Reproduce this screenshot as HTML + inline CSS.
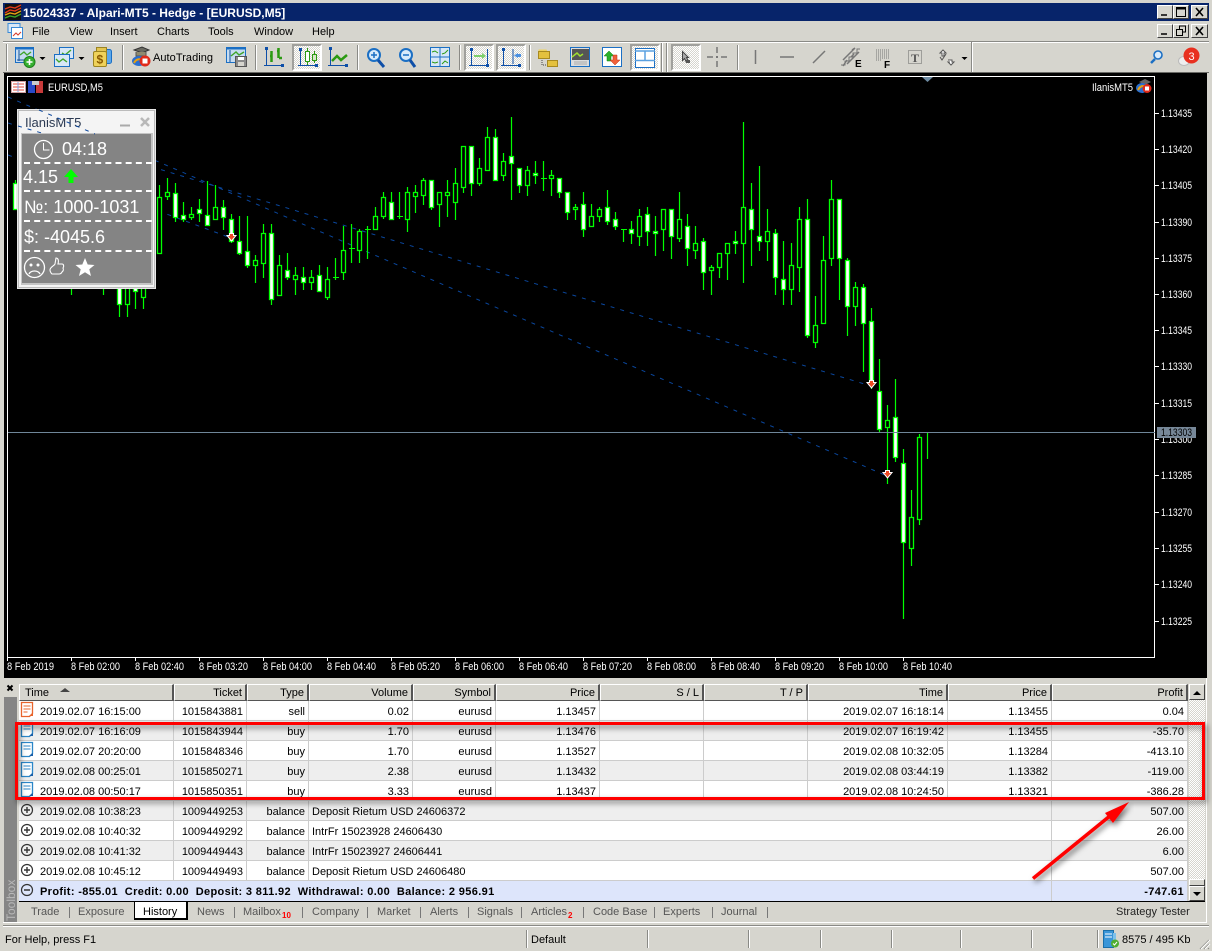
<!DOCTYPE html>
<html><head><meta charset="utf-8"><title>MT5</title>
<style>
html,body{margin:0;padding:0}
body{width:1212px;height:951px;position:relative;overflow:hidden;background:#d6d5ce;font:11px "Liberation Sans",sans-serif;color:#000}
.a{position:absolute;white-space:nowrap}
.dith{position:absolute;background:repeating-conic-gradient(#fff 0 25%,#d6d5ce 0 50%) 0 0/2px 2px;box-sizing:border-box;border:2px solid;border-color:#a0a09c #fff #fff #a0a09c}
.wb{position:absolute;width:16px;height:14px;background:#d6d5ce;box-sizing:border-box;border:1px solid;border-color:#fff #404040 #404040 #fff}
.sep{position:absolute;width:1px;background:#8a8a86;border-right:1px solid #fff}
table{position:absolute;left:19px;top:684px;width:1169px;border-collapse:separate;border-spacing:0;table-layout:fixed;font-size:11px}
th{height:17px;padding:1px 3px 0 0;font-weight:normal;text-align:right;background:#d6d5ce;box-sizing:border-box;border-top:1px solid #fff;border-left:1px solid #fff;border-right:2px solid #555;border-bottom:1px solid #555;overflow:hidden}
td{height:20px;box-sizing:border-box;padding:2px 3px 0 0;text-align:right;border-right:1px solid #ccc;border-bottom:1px solid #ccc;white-space:nowrap;overflow:hidden}
tr.g td{background:#eee}tr.w td{background:#fff}
tr.f td{background:#dde5fb;font-weight:bold;border-bottom:0;height:20px;letter-spacing:.35px}
td.l{text-align:left;padding-left:3px}
td.t{text-align:left;padding-left:21px}
.tb{position:absolute;top:905px;color:#555;line-height:14px}
.ts{position:absolute;top:907px;width:1px;height:11px;background:#777}
.n{position:absolute;font:bold 8px "Liberation Sans",sans-serif;color:#f00;top:911px}
.m{position:absolute;top:26px;line-height:13px}
.ss{position:absolute;top:930px;width:1px;height:18px;background:#8a8a86;border-right:1px solid #fff}
</style></head><body>

<!-- title -->
<div class="a" style="left:3px;top:3px;width:1206px;height:18px;background:#07246a"></div>
<div class="a" style="left:23px;top:5px;color:#fff;font:bold 12px/16px 'Liberation Sans',sans-serif">15024337 - Alpari-MT5 - Hedge - [EURUSD,M5]</div>
<div class="wb" style="left:1157px;top:5px"></div><div class="wb" style="left:1173px;top:5px"></div><div class="wb" style="left:1191px;top:5px;width:17px"></div>
<div class="wb" style="left:1157px;top:24px"></div><div class="wb" style="left:1173px;top:24px"></div><div class="wb" style="left:1191px;top:24px;width:17px"></div>

<!-- menu -->
<div class="m" style="left:32px">File</div><div class="m" style="left:69px">View</div><div class="m" style="left:110px">Insert</div><div class="m" style="left:157px">Charts</div><div class="m" style="left:208px">Tools</div><div class="m" style="left:254px">Window</div><div class="m" style="left:312px">Help</div>

<div class="a" style="left:3px;top:41px;width:1206px;height:1px;background:#8a8a86"></div>
<div class="a" style="left:3px;top:42px;width:1206px;height:1px;background:#fff"></div>

<!-- toolbar -->
<div class="dith" style="left:292px;top:44px;width:30px;height:27px"></div>
<div class="dith" style="left:464px;top:44px;width:30px;height:27px"></div>
<div class="dith" style="left:496px;top:44px;width:30px;height:27px"></div>
<div class="dith" style="left:630px;top:44px;width:30px;height:27px"></div>
<div class="dith" style="left:671px;top:44px;width:30px;height:27px"></div>
<div class="sep" style="left:6px;top:44px;height:27px"></div>
<div class="sep" style="left:122px;top:45px;height:25px"></div>
<div class="sep" style="left:255px;top:45px;height:25px"></div>
<div class="sep" style="left:357px;top:45px;height:25px"></div>
<div class="sep" style="left:459px;top:45px;height:25px"></div>
<div class="sep" style="left:529px;top:45px;height:25px"></div>
<div class="sep" style="left:661px;top:43px;height:29px"></div>
<div class="sep" style="left:666px;top:43px;height:29px"></div>
<div class="sep" style="left:737px;top:45px;height:25px"></div>
<div class="sep" style="left:971px;top:42px;height:30px"></div>
<div class="a" style="left:153px;top:51px;font-size:11px;line-height:14px;letter-spacing:.05px">AutoTrading</div>

<svg class="a" style="left:0;top:0" width="1212" height="76" viewBox="0 0 1212 76" fill="none">
<!-- title logo -->
<rect x="5" y="4" width="16" height="16" fill="#111"/>
<path d="M5 9l5-2 5 1 6-3M5 13l5-3 5 1 6-3" stroke="#e23a1a" stroke-width="1.4"/><path d="M5 15l5-2 5 1 6-3" stroke="#e8a010" stroke-width="1.4"/><path d="M5 18l5-2 5 1 6-3" stroke="#3aa52a" stroke-width="1.4"/>
<!-- window buttons -->
<g stroke="#000" stroke-width="1.6"><path d="M1161 15h6M1161 34h6M1196 8l7 8M1203 8l-7 8M1196 27l7 8M1203 27l-7 8" /></g>
<rect x="1176.500" y="7.500" width="9" height="9" stroke="#000"/><path d="M1176 8.500h10" stroke="#000" stroke-width="2"/>
<path d="M1176.500 29.500h6v6h-6zM1179.500 29v-3h6v6h-3" stroke="#000"/>
<!-- menu doc icon -->
<rect x="8" y="23.500" width="12" height="9" fill="#d9e8f7" stroke="#3a8ad6"/><rect x="11.500" y="27.500" width="11" height="11" fill="#fff" stroke="#3a8ad6"/><path d="M13 36l3-3 2 2 3-3" stroke="#d63a2a"/>
<!-- new chart -->
<rect x="15.500" y="47.500" width="18" height="15" fill="#c6dcf1" stroke="#1b6fc4"/><path d="M15 48.500h19" stroke="#1b6fc4" stroke-width="2"/><path d="M19 50v11M17 60h14" stroke="#124f9c"/><path d="M20 55l4-3 3 3 4-3" stroke="#3fa52a" stroke-width="1.400"/>
<circle cx="29.500" cy="62" r="5.500" fill="#35b030" stroke="#1f7f1d"/><path d="M29.500 59v6M26.500 62h6" stroke="#fff" stroke-width="1.600"/>
<path d="M39.500 57h6l-3 3z" fill="#000"/>
<!-- profiles -->
<rect x="59.500" y="47.500" width="14" height="11" fill="#d7e7f6" stroke="#1b6fc4"/><path d="M62 53l3 2 6-5" stroke="#3fa52a" stroke-width="1.400"/>
<rect x="54.500" y="54.500" width="15" height="12" fill="#d7e7f6" stroke="#1b6fc4"/><path d="M56 59l3 3 4-3 4 3" stroke="#3fa52a" stroke-width="1.400"/>
<path d="M78.500 57h6l-3 3z" fill="#000"/>
<!-- market -->
<rect x="99.500" y="49.500" width="12" height="14" rx="2" fill="#5ba7ea" stroke="#1b6fc4"/><rect x="96.500" y="47.500" width="10" height="6" fill="#e3c552" stroke="#9c8420"/>
<rect x="93.500" y="51.500" width="13" height="15" rx="1.500" fill="#efd25a" stroke="#9c8420"/><text x="96.500" y="63.500" font-family="Liberation Sans" font-weight="bold" font-size="12" fill="#8a5a00">$</text>
<!-- autotrading -->
<path d="M134 50l8-3 7 3-7 3z" fill="#6b6b62" stroke="#333"/><path d="M136 52v4h10v-4" fill="#8f8a70" stroke="#555"/><ellipse cx="139" cy="61" rx="7" ry="5" fill="#2a6fd0"/><path d="M134 63c2-4 6-5 9-2" stroke="#e8a010" stroke-width="2"/>
<circle cx="145" cy="61" r="5.500" fill="#e02a1a"/><rect x="142.500" y="58.500" width="5" height="5" fill="#fff"/>
<!-- chart save -->
<rect x="226.500" y="47.500" width="19" height="15" fill="#c6dcf1" stroke="#1b6fc4"/><path d="M226 48.500h20" stroke="#1b6fc4" stroke-width="2"/><path d="M230 50v12" stroke="#124f9c"/><path d="M231 56l5-4 3 3 5-3" stroke="#3fa52a" stroke-width="1.400"/>
<rect x="235.500" y="56.500" width="11" height="10" fill="#8b8b8b" stroke="#555"/><rect x="238" y="57" width="6" height="3" fill="#fff"/><rect x="238" y="62" width="6" height="4" fill="#d6d5ce"/>
<!-- bars -->
<g stroke="#0e4fa8"><path d="M266.500 47v18M264 65.500h20"/></g><path d="M265 47h3v3h-3zM281 64h3v3h-3z" fill="#0e4fa8"/>
<path d="M271.500 51v11M270 56h2M278.500 48v10M277 51h2M279 58h3" stroke="#2b9a12" stroke-width="2.500"/>
<!-- candles -->
<g stroke="#0e4fa8"><path d="M300.500 48v17M298 65.500h20"/></g><path d="M299 48h3v3h-3zM315 64h3v3h-3z" fill="#0e4fa8"/>
<path d="M307.500 48v17M314.500 51v12" stroke="#2b9a12"/><rect x="305.500" y="51.500" width="4" height="10" fill="#fff" stroke="#2b9a12"/><rect x="312.500" y="54.500" width="4" height="6" fill="#d6e8c8" stroke="#2b9a12"/>
<!-- line chart -->
<g stroke="#0e4fa8"><path d="M330.500 48v17M328 65.500h20"/></g><path d="M329 47h3v3h-3zM345 64h3v3h-3z" fill="#0e4fa8"/>
<path d="M332 61l5-5 4 4 6-5" stroke="#2b9a12" stroke-width="2.500"/>
<!-- zoom in / out -->
<circle cx="374" cy="55" r="6" fill="#d9ebfb" stroke="#1b6fc4" stroke-width="2"/><path d="M371 55h6M374 52v6" stroke="#1b6fc4" stroke-width="1.500"/><path d="M378 60l6 7" stroke="#0e4fa8" stroke-width="3"/>
<circle cx="406" cy="55" r="6" fill="#d9ebfb" stroke="#1b6fc4" stroke-width="2"/><path d="M403 55h6" stroke="#1b6fc4" stroke-width="1.500"/><path d="M410 60l5 7" stroke="#0e4fa8" stroke-width="3"/>
<!-- tile -->
<rect x="430.500" y="47.500" width="19" height="19" fill="#d7e7f6" stroke="#1b6fc4"/><path d="M440 47v20M430 57h20" stroke="#1b6fc4"/><path d="M432 52l3-1 3 2M442 54l3-1 3-3M432 62l3 1 3-1M442 64l3-3 3 2" stroke="#2b9a12"/>
<!-- shift -->
<path d="M471.500 49v17M469 65.500h19M487.500 49v15" stroke="#0e4fa8"/><path d="M470 48h3v3h-3zM486 64h3v3h-3z" fill="#0e4fa8"/><path d="M474 55h8v-2l4 3-4 3v-2h-8z" fill="#7ccf6a"/>
<path d="M503.500 49v17M501 65.500h19M513 49v15" stroke="#0e4fa8"/><path d="M502 48h3v3h-3zM518 64h3v3h-3z" fill="#0e4fa8"/><path d="M521 54h-3v-1l-4 2.500 4 2.500v-1h3z" fill="#4a8fe0"/>
<!-- folders -->
<path d="M538.500 49.500h8l1 2h2v5l-2 0v0h-9z" fill="#eed25f"/><rect x="538.500" y="51.500" width="11" height="7" fill="#e4c13e" stroke="#a88a20"/><rect x="547.500" y="60.500" width="10" height="6" fill="#e4c13e" stroke="#a88a20"/><path d="M542 60v5h5" stroke="#444" stroke-dasharray="1 1"/>
<!-- market watch -->
<rect x="570.500" y="47.500" width="19" height="19" fill="#ddd" stroke="#1b6fc4"/><rect x="572" y="49" width="17" height="11" fill="#555"/><path d="M572 57l5-4 3 3 3-2" stroke="#9fe030" stroke-width="1.500"/><path d="M574 62h13M574 64h13" stroke="#aaa"/>
<!-- up down -->
<rect x="602.500" y="47.500" width="19" height="19" fill="#fff" stroke="#1b6fc4"/><path d="M609 51l-5 5h3v5h4v-5h3z" fill="#2bb02b" stroke="#128012" stroke-width=".5"/><path d="M615 65l5-5h-3v-5h-4v5h-3z" fill="#f0603a" stroke="#c03010" stroke-width=".5"/>
<!-- layout -->
<rect x="635.500" y="48.500" width="19" height="19" fill="#fff" stroke="#1b6fc4"/><path d="M635 51h20M635 60.500h20M645 51v10" stroke="#5aa0e0" stroke-width="1.500"/>
<!-- cursor -->
<path d="M682.500 51.500l6 6h-2l2 4-2 1-2-4-2 2z" fill="#aaa" stroke="#444"/><rect x="686" y="60" width="4" height="3" fill="#555"/>
<!-- crosshair -->
<path d="M717 47v6M717 61v6M707 57h6M721 57h6" stroke="#777" stroke-width="1.500"/><rect x="716" y="56" width="2" height="2" fill="#777"/>
<!-- drawing -->
<path d="M755.500 50v14M780 57h14M813 63l12-12" stroke="#777" stroke-width="1.500"/>
<!-- E -->
<path d="M843 60l12-12M847 64l12-12M852 50l3-2M843 66l4-6M851 57l3-3" stroke="#777" stroke-width="1.500"/><path d="M841 65h4v-4h4v-4h4v-4h4v-4h3" stroke="#777"/>
<text x="855" y="67" font-family="Liberation Sans" font-weight="bold" font-size="10" fill="#000">E</text>
<!-- F -->
<path d="M876 50h14M876 52h14M876 54h14M876 56h14M876 58h14M876 60h6" stroke="#777" stroke-dasharray="1 1"/>
<text x="884" y="68" font-family="Liberation Sans" font-weight="bold" font-size="10" fill="#000">F</text>
<!-- T -->
<rect x="908.500" y="50.500" width="13" height="13" stroke="#666" stroke-dasharray="1 1"/><text x="911" y="62" font-family="Liberation Serif" font-weight="bold" font-size="12" fill="#555">T</text>
<!-- arrows -->
<path d="M943 50l3 3-2 0v3h-2v-3h-2zM948 60h2l2 0v2h2l-3 3-3-3h2" stroke="#555" fill="#fff"/><path d="M940 57l2 3 4-6" stroke="#555"/>
<path d="M961.500 57h6l-3 3z" fill="#000"/>
<!-- search -->
<circle cx="1158" cy="55" r="4" fill="#d9ebfb" stroke="#1b6fc4" stroke-width="1.600"/><path d="M1155 59l-4 4" stroke="#1b6fc4" stroke-width="2.500"/>
<!-- bubble -->
<ellipse cx="1184" cy="61" rx="5.500" ry="4.500" fill="#eee" stroke="#bbb"/><circle cx="1191.500" cy="55.500" r="8" fill="#e8301f"/>
<text x="1188.500" y="60" font-family="Liberation Sans" font-size="11" fill="#fff">3</text>
</svg>

<!-- chart frame -->
<div class="a" style="left:3px;top:72px;width:1206px;height:1px;background:#6a6a66"></div>
<div class="a" style="left:4px;top:73px;width:1203px;height:605px;background:#000"></div>

<svg class="a" style="left:0;top:0" width="1212" height="680" viewBox="0 0 1212 680" fill="none">
<path d="M7.500 76.500H1154.500V657.500H7.500z" stroke="#fff"/>
<path d="M922 77h11l-5.500 5z" fill="#6f8ca3"/>
<!-- blue lines -->
<g stroke="#0a469c" stroke-dasharray="4 6">
<path d="M8 97L887 476"/><path d="M8 123L871 386"/><path d="M8 155L231 238"/>
</g>
<!-- wicks -->
<path stroke="#0f0" stroke-width="1.2" d="M15.500 180V209M71.500 288V295M103.500 288V295M119.500 288V317M127.500 288V317M135.500 288V309M143.500 288V309M159.500 185V253M167.500 178V200M175.500 183V222M183.500 202V222M191.500 207V220M199.500 199V222M207.500 181V225M215.500 185V219M223.500 200V230M231.500 214V243M239.500 216V255M247.500 216V268M255.500 255V283M263.500 224V278M271.500 224V305M279.500 255V295M287.500 253V280M295.500 267V295M303.500 267V290M311.500 270V290M319.500 265V291M327.500 267V300M335.500 258V280M343.500 226V280M351.500 224V263M359.500 229V263M367.500 226V259M375.500 207V229M383.500 192V219M391.500 192V219M399.500 192V219M407.500 187V232M415.500 185V213M423.500 178V205M431.500 180V210M439.500 192V227M447.500 180V217M455.500 168V220M463.500 146V193M471.500 146V196M479.500 158V186M487.500 127V170M495.500 129V180M503.500 153V181M511.500 117V200M519.500 168V193M527.500 166V196M535.500 161V184M543.500 161V191M551.500 170V196M559.500 178V198M567.500 192V220M575.500 204V220M583.500 192V237M591.500 204V226M599.500 207V222M607.500 190V225M615.500 212V230M623.500 229V242M631.500 221V244M639.500 209V246M647.500 207V246M655.500 216V256M663.500 209V251M671.500 209V259M679.500 192V242M687.500 214V266M695.500 226V259M703.500 238V290M711.500 265V295M719.500 253V278M727.500 243V280M735.500 231V254M743.500 122V283M751.500 183V266M759.500 166V251M767.500 209V261M775.500 229V295M783.500 241V305M791.500 243V305M799.500 207V292M807.500 199V338M815.500 296V348M823.500 236V323M831.500 180V266M839.500 199V300M847.500 258V336M855.500 282V326M863.500 284V372M871.500 308V389M879.500 359V432M887.500 405V484M895.500 379V462M903.500 449V619M911.500 490V566M919.500 434V525M927.500 432V459"/>
<!-- doji -->
<path stroke="#0f0" d="M333 277.500h6M349 248.500h6M365 229.500h6M397 216.500h6M541 178.500h6M621 229.500h6M925 432.500h6"/>
<!-- hollow -->
<path stroke="#0f0" stroke-width="1.300" fill="#000" d="M125.500 270.500h4v34h-4zM141.500 270.500h4v27h-4zM157.500 197.500h4v56h-4zM165.500 192.500h4v4h-4zM189.500 214.500h4v3h-4zM213.500 207.500h4v12h-4zM253.500 260.500h4v5h-4zM261.500 233.500h4v30h-4zM277.500 265.500h4v30h-4zM293.500 275.500h4v4h-4zM309.500 277.500h4v5h-4zM325.500 279.500h4v18h-4zM341.500 250.500h4v22h-4zM357.500 231.500h4v19h-4zM373.500 216.500h4v13h-4zM381.500 197.500h4v19h-4zM405.500 192.500h4v27h-4zM413.500 192.500h4v4h-4zM421.500 180.500h4v15h-4zM437.500 192.500h4v12h-4zM445.500 192.500h4v3h-4zM453.500 183.500h4v19h-4zM461.500 146.500h4v41h-4zM477.500 168.500h4v15h-4zM485.500 137.500h4v33h-4zM501.500 161.500h4v14h-4zM525.500 170.500h4v15h-4zM549.500 175.500h4v3h-4zM573.500 207.500h4v2h-4zM589.500 216.500h4v10h-4zM597.500 209.500h4v7h-4zM637.500 216.500h4v20h-4zM661.500 209.500h4v20h-4zM677.500 219.500h4v19h-4zM693.500 243.500h4v7h-4zM709.500 267.500h4v3h-4zM717.500 253.500h4v14h-4zM725.500 243.500h4v10h-4zM741.500 207.500h4v36h-4zM765.500 231.500h4v10h-4zM789.500 265.500h4v24h-4zM797.500 219.500h4v48h-4zM813.500 325.500h4v17h-4zM821.500 260.500h4v63h-4zM829.500 199.500h4v59h-4zM853.500 287.500h4v19h-4zM885.500 420.500h4v7h-4zM909.500 517.500h4v31h-4zM917.500 437.500h4v82h-4z"/>
<!-- white -->
<path stroke="#0f0" stroke-width="1.300" fill="#fff" d="M13.500 183.500h4v26h-4zM117.500 270.500h4v34h-4zM133.500 270.500h4v21h-4zM173.500 193.500h4v24h-4zM181.500 215.500h4v4h-4zM197.500 209.500h4v4h-4zM205.500 215.500h4v10h-4zM221.500 207.500h4v10h-4zM229.500 219.500h4v22h-4zM237.500 241.500h4v12h-4zM245.500 251.500h4v14h-4zM269.500 233.500h4v66h-4zM285.500 270.500h4v7h-4zM301.500 277.500h4v5h-4zM317.500 275.500h4v16h-4zM389.500 202.500h4v17h-4zM429.500 180.500h4v27h-4zM469.500 146.500h4v37h-4zM493.500 137.500h4v43h-4zM509.500 156.500h4v7h-4zM517.500 168.500h4v17h-4zM533.500 173.500h4v2h-4zM557.500 178.500h4v14h-4zM565.500 192.500h4v20h-4zM581.500 204.500h4v25h-4zM605.500 207.500h4v14h-4zM613.500 219.500h4v7h-4zM629.500 229.500h4v4h-4zM645.500 214.500h4v17h-4zM653.500 231.500h4v2h-4zM669.500 209.500h4v27h-4zM685.500 226.500h4v22h-4zM701.500 241.500h4v31h-4zM733.500 241.500h4v2h-4zM749.500 209.500h4v20h-4zM757.500 236.500h4v5h-4zM773.500 233.500h4v44h-4zM781.500 279.500h4v10h-4zM805.500 219.500h4v116h-4zM837.500 199.500h4v59h-4zM845.500 260.500h4v46h-4zM861.500 287.500h4v36h-4zM869.500 321.500h4v62h-4zM877.500 391.500h4v38h-4zM893.500 417.500h4v40h-4zM901.500 463.500h4v79h-4z"/>
<!-- red markers -->
<g fill="#ee4a24" stroke="#fff"><path d="M229.500 233.500h4v2h2.500l-4.500 5.500-4.500-5.500h2.500z"/><path d="M869.500 380.500h4v2h2.500l-4.500 5.500-4.500-5.500h2.500z"/><path d="M885.500 470.500h4v2h2.500l-4.500 5.500-4.500-5.500h2.500z"/></g>
<!-- current price line -->
<path d="M8 432.500H1155" stroke="#6f8699"/>
<!-- axis ticks -->
<path stroke="#fff" d="M1155 113.500h4M1155 149.500h4M1155 185.500h4M1155 222.500h4M1155 258.500h4M1155 294.500h4M1155 330.500h4M1155 366.500h4M1155 403.500h4M1155 439.500h4M1155 475.500h4M1155 512.500h4M1155 548.500h4M1155 584.500h4M1155 621.500h4M7.500 658v3M71.500 658v3M135.500 658v3M199.500 658v3M263.500 658v3M327.500 658v3M391.500 658v3M455.500 658v3M519.500 658v3M583.500 658v3M647.500 658v3M711.500 658v3M775.500 658v3M839.500 658v3M903.500 658v3"/>
<g font-family="Liberation Sans" font-size="11" fill="#fff">
<text x="1161" y="117" textLength="31" lengthAdjust="spacingAndGlyphs">1.13435</text>
<text x="1161" y="153" textLength="31" lengthAdjust="spacingAndGlyphs">1.13420</text>
<text x="1161" y="189" textLength="31" lengthAdjust="spacingAndGlyphs">1.13405</text>
<text x="1161" y="226" textLength="31" lengthAdjust="spacingAndGlyphs">1.13390</text>
<text x="1161" y="262" textLength="31" lengthAdjust="spacingAndGlyphs">1.13375</text>
<text x="1161" y="298" textLength="31" lengthAdjust="spacingAndGlyphs">1.13360</text>
<text x="1161" y="334" textLength="31" lengthAdjust="spacingAndGlyphs">1.13345</text>
<text x="1161" y="370" textLength="31" lengthAdjust="spacingAndGlyphs">1.13330</text>
<text x="1161" y="407" textLength="31" lengthAdjust="spacingAndGlyphs">1.13315</text>
<text x="1161" y="443" textLength="31" lengthAdjust="spacingAndGlyphs">1.13300</text>
<text x="1161" y="479" textLength="31" lengthAdjust="spacingAndGlyphs">1.13285</text>
<text x="1161" y="516" textLength="31" lengthAdjust="spacingAndGlyphs">1.13270</text>
<text x="1161" y="552" textLength="31" lengthAdjust="spacingAndGlyphs">1.13255</text>
<text x="1161" y="588" textLength="31" lengthAdjust="spacingAndGlyphs">1.13240</text>
<text x="1161" y="625" textLength="31" lengthAdjust="spacingAndGlyphs">1.13225</text>
<rect x="1157" y="427" width="39" height="11" fill="#778899"/>
<text x="1161" y="436" textLength="31" lengthAdjust="spacingAndGlyphs" fill="#000">1.13303</text>
<text x="7" y="670" textLength="47" lengthAdjust="spacingAndGlyphs">8 Feb 2019</text>
<text x="71" y="670" textLength="49" lengthAdjust="spacingAndGlyphs">8 Feb 02:00</text>
<text x="135" y="670" textLength="49" lengthAdjust="spacingAndGlyphs">8 Feb 02:40</text>
<text x="199" y="670" textLength="49" lengthAdjust="spacingAndGlyphs">8 Feb 03:20</text>
<text x="263" y="670" textLength="49" lengthAdjust="spacingAndGlyphs">8 Feb 04:00</text>
<text x="327" y="670" textLength="49" lengthAdjust="spacingAndGlyphs">8 Feb 04:40</text>
<text x="391" y="670" textLength="49" lengthAdjust="spacingAndGlyphs">8 Feb 05:20</text>
<text x="455" y="670" textLength="49" lengthAdjust="spacingAndGlyphs">8 Feb 06:00</text>
<text x="519" y="670" textLength="49" lengthAdjust="spacingAndGlyphs">8 Feb 06:40</text>
<text x="583" y="670" textLength="49" lengthAdjust="spacingAndGlyphs">8 Feb 07:20</text>
<text x="647" y="670" textLength="49" lengthAdjust="spacingAndGlyphs">8 Feb 08:00</text>
<text x="711" y="670" textLength="49" lengthAdjust="spacingAndGlyphs">8 Feb 08:40</text>
<text x="775" y="670" textLength="49" lengthAdjust="spacingAndGlyphs">8 Feb 09:20</text>
<text x="839" y="670" textLength="49" lengthAdjust="spacingAndGlyphs">8 Feb 10:00</text>
<text x="903" y="670" textLength="49" lengthAdjust="spacingAndGlyphs">8 Feb 10:40</text>
<text x="48" y="91" textLength="55" lengthAdjust="spacingAndGlyphs">EURUSD,M5</text>
<text x="1092" y="91" textLength="41" lengthAdjust="spacingAndGlyphs">IlanisMT5</text>
</g>
<!-- chart header icons -->
<rect x="11.500" y="81.500" width="14" height="11" fill="#fff" stroke="#d0a0a0"/><path d="M13 84h11M13 87h11M13 90h11" stroke="#e04a3a"/><path d="M18 82v10" stroke="#8aa0e0"/>
<rect x="28" y="81" width="7" height="12" fill="#2a4ac8"/><rect x="36" y="81" width="7" height="12" fill="#c83a3a"/><rect x="32" y="81" width="7" height="4" fill="#ccc"/>
<!-- top right icon -->
<path d="M1139 82l6-3 6 3-6 3z" fill="#666"/><ellipse cx="1142" cy="88" rx="6" ry="5" fill="#2a6fd0"/><path d="M1138 90c2-4 5-5 8-3" stroke="#e8a010" stroke-width="2"/><circle cx="1147" cy="88.500" r="4.500" fill="#e02a1a"/><rect x="1145" y="86.500" width="4" height="4" fill="#fff"/>
</svg>

<!-- panel -->
<div class="a" style="left:17px;top:109px;width:139px;height:180px;box-sizing:border-box;border:1px solid #e8e8e8;outline:0;background:#f4f4f4;box-shadow:inset 0 0 0 1px #bbb"></div>
<div class="a" style="left:21px;top:133px;width:132px;height:152px;box-sizing:border-box;background:#848484;border:1px solid #c4c4c4;border-width:1px 2px 2px 1px"></div>
<div class="a" style="left:25px;top:115px;font-size:13px;line-height:16px;color:#2c3a52">IlanisMT5</div>
<div class="a" style="left:24px;top:162px;width:128px;border-top:2px dashed #fff;height:0"></div>
<div class="a" style="left:24px;top:190px;width:128px;border-top:2px dashed #fff;height:0"></div>
<div class="a" style="left:24px;top:220px;width:128px;border-top:2px dashed #fff;height:0"></div>
<div class="a" style="left:24px;top:250px;width:128px;border-top:2px dashed #fff;height:0"></div>
<div class="a" style="left:62px;top:138px;font-size:18px;line-height:22px;color:#fff">04:18</div>
<div class="a" style="left:23px;top:166px;font-size:18px;line-height:22px;color:#fff">4.15</div>
<div class="a" style="left:24px;top:196px;font-size:18px;line-height:22px;color:#fff;font-family:'Liberation Sans','Noto Sans CJK JP',sans-serif">№: 1000-1031</div>
<div class="a" style="left:24px;top:226px;font-size:18px;line-height:22px;color:#fff">$: -4045.6</div>
<svg class="a" style="left:0;top:100px" width="170" height="190" viewBox="0 100 170 190" fill="none">
<path d="M120 125.500h10" stroke="#aaa" stroke-width="2"/><path d="M141 118l8 8M149 118l-8 8" stroke="#b8b8b8" stroke-width="2.500"/>
<g stroke="#0a469c" stroke-dasharray="4 6"><path d="M39 110L95 134"/><path d="M18 126L45 134"/></g>
<circle cx="43.500" cy="149.500" r="9" stroke="#fff" stroke-width="1.300"/><path d="M43.500 143v7h6" stroke="#fff"/>
<path d="M71 169l-7 8h4.500v6h5v-6h4.500z" fill="#0f0"/>
<circle cx="34.500" cy="267.500" r="10" stroke="#fff" stroke-width="1.300"/><circle cx="31" cy="265" r="1.500" fill="#fff"/><circle cx="38" cy="265" r="1.500" fill="#fff"/><path d="M29 274c2-4 9-4 11 0" stroke="#fff" stroke-width="1.300"/>
<path d="M50 270c0-3 4-4 5-6l1-6c2 0 3 2 2 6h4c2 0 2 3 1 4 1 2 0 3-1 4-1 2-2 2-3 2h-7c-1-1-2-2-2-4z" stroke="#fff" stroke-width="1.100"/>
<path d="M85 258l2.700 6.500 6.800.5-5.200 4.300 1.700 6.700-6-3.700-6 3.700 1.700-6.700-5.200-4.300 6.800-.5z" fill="#fff"/>
</svg>

<!-- toolbox -->
<div class="a" style="left:0;top:678px;width:1212px;height:273px;background:#d6d5ce"></div>
<div class="a" style="left:1206px;top:678px;width:1px;height:244px;background:#fff"></div>
<div class="a" style="left:4px;top:697px;width:13px;height:225px;background:#858585"></div>
<div class="a" style="left:3px;top:905px;width:16px;font-size:12px;line-height:16px;color:#b8b8b8;transform:rotate(-90deg);transform-origin:8px 8px;">Toolbox</div>
<table>
<colgroup><col style="width:155px"><col style="width:73px"><col style="width:62px"><col style="width:104px"><col style="width:83px"><col style="width:104px"><col style="width:104px"><col style="width:104px"><col style="width:140px"><col style="width:104px"><col style="width:136px"></colgroup>
<tr><th style="text-align:left;padding-left:5px">Time</th><th>Ticket</th><th>Type</th><th>Volume</th><th>Symbol</th><th>Price</th><th>S / L</th><th>T / P</th><th>Time</th><th>Price</th><th>Profit</th></tr>
<tr class="w"><td class="t">2019.02.07 16:15:00</td><td>1015843881</td><td>sell</td><td>0.02</td><td>eurusd</td><td>1.13457</td><td></td><td></td><td>2019.02.07 16:18:14</td><td>1.13455</td><td>0.04</td></tr>
<tr class="g"><td class="t">2019.02.07 16:16:09</td><td>1015843944</td><td>buy</td><td>1.70</td><td>eurusd</td><td>1.13476</td><td></td><td></td><td>2019.02.07 16:19:42</td><td>1.13455</td><td>-35.70</td></tr>
<tr class="w"><td class="t">2019.02.07 20:20:00</td><td>1015848346</td><td>buy</td><td>1.70</td><td>eurusd</td><td>1.13527</td><td></td><td></td><td>2019.02.08 10:32:05</td><td>1.13284</td><td>-413.10</td></tr>
<tr class="g"><td class="t">2019.02.08 00:25:01</td><td>1015850271</td><td>buy</td><td>2.38</td><td>eurusd</td><td>1.13432</td><td></td><td></td><td>2019.02.08 03:44:19</td><td>1.13382</td><td>-119.00</td></tr>
<tr class="w"><td class="t">2019.02.08 00:50:17</td><td>1015850351</td><td>buy</td><td>3.33</td><td>eurusd</td><td>1.13437</td><td></td><td></td><td>2019.02.08 10:24:50</td><td>1.13321</td><td>-386.28</td></tr>
<tr class="g"><td class="t">2019.02.08 10:38:23</td><td>1009449253</td><td>balance</td><td class="l" colspan="7">Deposit Rietum USD 24606372</td><td>507.00</td></tr>
<tr class="w"><td class="t">2019.02.08 10:40:32</td><td>1009449292</td><td>balance</td><td class="l" colspan="7">IntrFr 15023928 24606430</td><td>26.00</td></tr>
<tr class="g"><td class="t">2019.02.08 10:41:32</td><td>1009449443</td><td>balance</td><td class="l" colspan="7">IntrFr 15023927 24606441</td><td>6.00</td></tr>
<tr class="w"><td class="t">2019.02.08 10:45:12</td><td>1009449493</td><td>balance</td><td class="l" colspan="7">Deposit Rietum USD 24606480</td><td>507.00</td></tr>
<tr class="f"><td class="t" colspan="10" style="border-right:1px solid #ccc">Profit: -855.01&nbsp; Credit: 0.00&nbsp; Deposit: 3 811.92&nbsp; Withdrawal: 0.00&nbsp; Balance: 2 956.91</td><td>-747.61</td></tr>
</table>

<!-- scrollbar -->
<div class="a" style="left:1189px;top:700px;width:16px;height:200px;background:repeating-conic-gradient(#fff 0 25%,#d6d5ce 0 50%) 0 0/2px 2px"></div>
<div class="wb" style="left:1189px;top:684px;width:16px;height:16px"></div>
<div class="wb" style="left:1189px;top:879px;width:16px;height:7px"></div>
<div class="wb" style="left:1189px;top:886px;width:16px;height:15px"></div>
<div class="a" style="left:19px;top:901px;width:1186px;height:1px;background:#000"></div>

<!-- tabs -->
<div class="a" style="left:134px;top:901px;width:54px;height:19px;box-sizing:border-box;background:#fff;border:1px solid #000;border-top:1px solid #000;border-width:1px 2px 2px 1px"></div>
<div class="tb" style="left:31px">Trade</div><div class="ts" style="left:69px"></div>
<div class="tb" style="left:78px">Exposure</div>
<div class="tb" style="left:143px;color:#000">History</div>
<div class="tb" style="left:197px">News</div><div class="ts" style="left:234px"></div>
<div class="tb" style="left:243px">Mailbox</div><div class="n" style="left:282px">10</div><div class="ts" style="left:302px"></div>
<div class="tb" style="left:312px">Company</div><div class="ts" style="left:367px"></div>
<div class="tb" style="left:377px">Market</div><div class="ts" style="left:420px"></div>
<div class="tb" style="left:430px">Alerts</div><div class="ts" style="left:468px"></div>
<div class="tb" style="left:477px">Signals</div><div class="ts" style="left:521px"></div>
<div class="tb" style="left:531px">Articles</div><div class="n" style="left:568px">2</div><div class="ts" style="left:583px"></div>
<div class="tb" style="left:593px">Code Base</div><div class="ts" style="left:654px"></div>
<div class="tb" style="left:663px">Experts</div><div class="ts" style="left:712px"></div>
<div class="tb" style="left:721px">Journal</div><div class="ts" style="left:767px"></div>
<div class="tb" style="left:1116px;color:#222">Strategy Tester</div>

<!-- status -->
<div class="a" style="left:3px;top:922px;width:1204px;height:1px;background:#fff"></div>
<div class="a" style="left:3px;top:925px;width:1206px;height:1px;background:#8a8a86"></div>
<div class="a" style="left:3px;top:926px;width:1206px;height:1px;background:#fff"></div>
<div class="a" style="left:5px;top:933px;line-height:14px">For Help, press F1</div>
<div class="a" style="left:531px;top:933px;line-height:14px">Default</div>
<div class="a" style="left:1122px;top:933px;line-height:14px">8575 / 495 Kb</div>
<div class="ss" style="left:526px"></div><div class="ss" style="left:647px"></div><div class="ss" style="left:748px"></div><div class="ss" style="left:820px"></div><div class="ss" style="left:891px"></div><div class="ss" style="left:960px"></div><div class="ss" style="left:1031px"></div><div class="ss" style="left:1097px"></div>

<svg class="a" style="left:0;top:678px" width="1212" height="273" viewBox="0 678 1212 273" fill="none">
<defs><filter id="sh" x="-5%" y="-30%" width="110%" height="160%"><feDropShadow dx="2" dy="3" stdDeviation="3" flood-color="#000" flood-opacity=".55"/></filter></defs>
<!-- toolbox X -->
<path d="M7.500 685.500l5 5M12.500 685.500l-5 5" stroke="#000" stroke-width="2"/>
<path d="M60 692h10l-5-4z" fill="#444"/>
<!-- sell doc -->
<path d="M21.500 702.500h11v11l-3 3h-8z" fill="#fff" stroke="#e8642c" stroke-width="1.300"/><path d="M23.500 706h7M23.500 709h7M23.500 712h4" stroke="#e8642c"/><path d="M29 716l4-3v3z" fill="#e8642c"/>
<!-- buy docs -->
<g stroke="#2a86c8" stroke-width="1.300" fill="#fff"><path d="M21.500 722.500h11v11l-3 3h-8z"/><path d="M21.500 742.500h11v11l-3 3h-8z"/><path d="M21.500 762.500h11v11l-3 3h-8z"/><path d="M21.500 782.500h11v11l-3 3h-8z"/></g>
<path stroke="#2a86c8" d="M23.500 726h7M23.500 729h7M23.500 746h7M23.500 749h7M23.500 766h7M23.500 769h7M23.500 786h7M23.500 789h7"/>
<path d="M29 736l4-3v3zM29 756l4-3v3zM29 776l4-3v3zM29 796l4-3v3z" fill="#1b5fa8"/>
<!-- plus circles -->
<g stroke="#333" stroke-width="1.200"><circle cx="27" cy="810" r="5.500"/><circle cx="27" cy="830" r="5.500"/><circle cx="27" cy="850" r="5.500"/><circle cx="27" cy="870" r="5.500"/><circle cx="27" cy="890" r="5.500"/></g>
<path stroke="#333" stroke-width="1.400" d="M24 810h6M27 807v6M24 830h6M27 827v6M24 850h6M27 847v6M24 870h6M27 867v6M24 890h6"/>
<!-- scroll arrows -->
<path d="M1193 695h8l-4-4zM1193 892h8l-4 4z" fill="#000"/>
<!-- red box and arrow -->
<g filter="url(#sh)"><rect x="16.500" y="723.500" width="1187" height="75" stroke="#f00" stroke-width="3"/></g>
<g filter="url(#sh)"><path d="M1033 878.500L1116 811" stroke="#f00" stroke-width="3.500"/><path d="M1129 802L1105 813L1113 823z" fill="#f00"/></g>
<!-- status icon -->
<rect x="1103.500" y="930.500" width="10" height="17" fill="#3a96d8" stroke="#1b6fa8"/><path d="M1105 934h7M1105 937h7" stroke="#fff"/><rect x="1113" y="933" width="3" height="12" fill="#7cc0ea"/><circle cx="1115" cy="943.500" r="4" fill="#4fae30"/><path d="M1113 943.500l1.500 1.500 2.500-3" stroke="#fff"/>
<!-- grip -->
<path d="M1200 949l9-9M1204 949l5-5M1208 949l1-1" stroke="#8a8a86"/><path d="M1201 949l9-9M1205 949l5-5" stroke="#fff"/>
</svg>
</body></html>
